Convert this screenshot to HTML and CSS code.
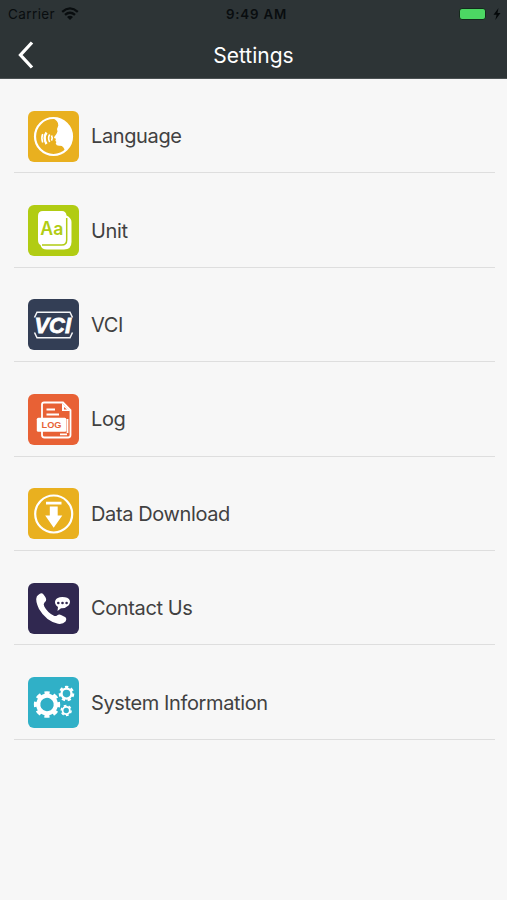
FILE: index.html
```html
<!DOCTYPE html>
<html lang="en">
<head>
<meta charset="utf-8">
<title>Settings</title>
<link rel="stylesheet" href="styles.css">
</head>
<body>
<header class="header">
  <div class="status">
    <div class="carrier"><span>Carrier</span>
      <svg class="wifi" width="18" height="13" viewBox="0 0 18 13" fill="none" stroke="#090d0f" stroke-width="2.3"><path d="M1.200 4.800Q9-2 16.800 4.800M4 7.900Q9 3.600 14 7.900"/><path d="M6 10Q9 7.600 12 10L9 13Z" fill="#090d0f" stroke="none"/></svg>
    </div>
    <span class="time">9:49 AM</span>
    <div class="power"><span class="battery"></span>
      <svg width="8" height="12" viewBox="0 0 8 12"><path d="M5.500 0 .5 6.700H3.600L2.300 12 7.500 5H4.500Z" fill="#05090a"/></svg>
    </div>
  </div>
  <nav class="nav">
    <svg class="back" width="16" height="28" viewBox="0 0 16 28" fill="none" stroke="#fff" stroke-width="3.300"><path d="M14 1.500 2.500 14 14 26.500"/></svg>
    <h1 class="title">Settings</h1>
  </nav>
</header>
<main class="list">
  <div class="row">
    <svg class="icon amber" viewBox="0 0 51 51"><circle cx="25.500" cy="25.500" r="18.500" fill="none" stroke="#fff" stroke-width="2.200"/><path d="M24.500 7Q30.500 9.500 30.300 14.500Q28.500 17.500 29.500 20.500Q28.700 23.500 26 26.200Q26 27.500 28 27.800L27.300 29.800 28.400 31 27.700 32.500Q28.300 35.200 32 34.800Q36 34.800 37 40.500A19 19 0 0 0 24.500 7Z" fill="#fff"/><g fill="none" stroke="#fff"><path d="M18.500 21.500Q14.800 27 18.500 33" stroke-width="2.400"/><path d="M21.700 23.500Q19.500 27 21.700 31M14.700 23Q13 27 14.700 31.500M23.500 24.500Q25 27 23.500 29.700" stroke-width="1.600"/></g></svg>
    <span class="label">Language</span>
  </div>
  <div class="row">
    <svg class="icon lime" viewBox="0 0 51 51"><path d="M15 6H34Q38 6 38.500 10.500Q43.500 13 43.500 17V37Q43.500 44.500 36 44.500H19Q13.500 44.500 12.500 40Q10 39 10 35V11Q10 6 15 6Z" fill="#fff"/><path d="M38.700 13V35Q38.700 40 33.700 40H14" fill="none" stroke="#b1cc13" stroke-width="1.500"/><text x="12.300" y="30" textLength="23" lengthAdjust="spacingAndGlyphs" class="aa">Aa</text></svg>
    <span class="label">Unit</span>
  </div>
  <div class="row">
    <svg class="icon navy" viewBox="0 0 51 51"><path d="M6.500 18.500 9 13.300H42L44.500 18.500M6.500 33.500 9 38.700H42L44.500 33.500" fill="none" stroke="#f5f6f8" stroke-width="1.500"/><text x="6.500" y="33.800" textLength="36.500" lengthAdjust="spacingAndGlyphs" class="vci">VCI</text></svg>
    <span class="label">VCI</span>
  </div>
  <div class="row">
    <svg class="icon orange" viewBox="0 0 51 51"><path d="M14 24V10.500Q14 8.500 16 8.500H35L42.500 16V41Q42.500 43.500 40 43.500H16.500Q14 43.500 14 41V37" fill="none" stroke="#fff" stroke-width="1.800"/><path d="M34 9V17H42.500" fill="#fff"/><path d="M36 13V15.500H39Z" fill="#e86135"/><path d="M18.500 15.500H27M18.500 20.500H31M32 40.300H39M39.500 25V39" stroke="#fff" stroke-width="1.800"/><rect x="8.800" y="23.700" width="29.500" height="14" rx="1.500" fill="#fff"/><text x="13.500" y="34.200" textLength="20" lengthAdjust="spacingAndGlyphs" class="log">LOG</text></svg>
    <span class="label">Log</span>
  </div>
  <div class="row">
    <svg class="icon amber" viewBox="0 0 51 51"><circle cx="25.700" cy="26" r="18.500" fill="none" stroke="#fff" stroke-width="2.200"/><path d="M18 13.700H33.500V16.600H18ZM21.800 18.500H29.700V27.500H34.300L25.700 39.800 17.200 27.500H21.800Z" fill="#fff"/></svg>
    <span class="label">Data Download</span>
  </div>
  <div class="row">
    <svg class="icon purple" viewBox="0 0 51 51"><path d="M11.500 11Q13.800 9.500 15.500 11.500Q17.600 14 18.200 16Q18.500 18 16.500 19.500Q15 20.800 16.300 23.500Q19.500 29.500 25.500 32.500Q27.500 33.500 29 32.500Q31 31 33 32L37 34Q39.300 35.500 37.500 38.500Q35 41.500 30 40.800Q18 38 11 26Q7 17.500 8.800 13.500Q9.700 12 11.500 11Z" fill="#fff"/><path d="M34.300 14C42.500 14 43.500 19 40.500 22.500Q37.500 25.500 33 25.200L29.500 28 30 24C24.500 20 27 14 34.300 14Z" fill="#fff"/><g fill="#302850"><circle cx="30.300" cy="20" r="1.300"/><circle cx="34.500" cy="20" r="1.300"/><circle cx="38.600" cy="20" r="1.300"/></g></svg>
    <span class="label">Contact Us</span>
  </div>
  <div class="row">
    <svg class="icon teal" viewBox="0 0 51 51"><g fill="none" stroke="#fff"><g transform="rotate(-12 19 27.500)"><circle cx="19" cy="27.500" r="8.800" stroke-width="4.200"/><circle cx="19" cy="27.500" r="11.500" stroke-width="3.400" pathLength="16" stroke-dasharray="1.100 .9"/></g><circle cx="38.500" cy="16.600" r="5" stroke-width="2.400"/><circle cx="38.500" cy="16.600" r="6.600" stroke-width="2.400" pathLength="14" stroke-dasharray="1.100 .9"/><circle cx="38.200" cy="33.500" r="3.600" stroke-width="1.800"/><circle cx="38.200" cy="33.500" r="4.900" stroke-width="1.600" pathLength="12" stroke-dasharray="1.100 .9"/></g></svg>
    <span class="label">System Information</span>
  </div>
</main>
</body>
</html>
```
FILE: styles.css
```css
* { box-sizing: border-box; }
body {
  margin: 0;
  height: 900px;
  overflow: hidden;
  background: #f7f7f7;
  color: #414141;
  font-family: Inter, "Liberation Sans", sans-serif;
}
.header { height: 79px; background: #2d3436; border-bottom: 1px solid #4b5153; }
.status {
  height: 28px;
  padding: 0 6px 0 8px;
  display: grid;
  grid-template-columns: 1fr auto 1fr;
  align-items: center;
  color: #090d0f;
  font-size: 13.500px;
}
.carrier { display: flex; align-items: center; gap: 6px; letter-spacing: .4px; }
.wifi { margin-top: -2px; }
.time { font-weight: 600; font-size: 13.300px; letter-spacing: .8px; margin-left: 4px; }
.power { display: flex; justify-content: flex-end; align-items: center; gap: 7px; }
.battery { width: 27px; height: 12px; border: 1px solid #142a1c; border-radius: 3px; background: #4cd763; }
.nav { height: 51px; padding-top: 3px; display: grid; grid-template-columns: 80px 1fr 80px; align-items: center; }
.back { margin-left: 18px; }
.title { margin: 0; color: #fff; font-size: 21px; font-weight: 400; text-align: center; }
.list { padding: 0 12px 0 14px; }
.row {
  height: 94.400px;
  padding: 21px 0 0 14px;
  display: flex;
  align-items: center;
  gap: 12px;
  border-bottom: 1px solid #dedede;
}
.icon { width: 51px; height: 51px; border-radius: 6px; flex: none; }
.amber { background: #e9b01f; }
.lime { background: #b1cc13; }
.navy { background: #333e55; }
.orange { background: #e86135; }
.purple { background: #302850; }
.teal { background: #30b0c7; }
.label { font-size: 20px; line-height: 26px; letter-spacing: -.38px; white-space: nowrap; }
.aa { font: 600 18px Inter, sans-serif; fill: #b1cc13; }
.vci { font: italic 700 22px "Liberation Sans", sans-serif; fill: #fff; stroke: #fff; stroke-width: .8px; }
.log { font: 700 9.500px "Liberation Sans", sans-serif; fill: #e86135; }
```
